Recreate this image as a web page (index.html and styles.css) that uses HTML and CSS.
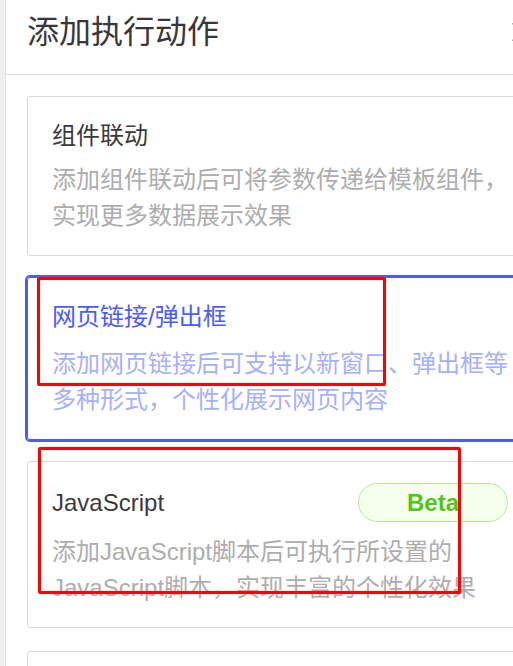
FILE: index.html
```html
<!DOCTYPE html>
<html lang="zh-CN">
<head>
  <meta charset="UTF-8">
  <meta name="viewport" content="width=device-width, initial-scale=1.0">
  <title>添加执行动作</title>
  <link rel="stylesheet" href="styles.css">
</head>
<body>
  <div class="page-edge"></div>
  <div class="drawer">
    <div class="drawer-header">
      <h1>添加执行动作</h1>
      <span class="close-icon">
        <svg width="22" height="22" viewBox="0 0 22 22"><path d="M2 2L20 20M20 2L2 20" stroke="#555" stroke-width="2.4" fill="none"/></svg>
      </span>
    </div>
    <div class="action-list">
      <!-- 组件联动 -->
      <div class="action-card">
        <div class="action-title">组件联动</div>
        <p class="action-desc">添加组件联动后可将参数传递给模板组件，实现更多数据展示效果</p>
      </div>
      <!-- 网页链接 -->
      <div class="action-card selected">
        <div class="action-title">网页链接/弹出框</div>
        <p class="action-desc">添加网页链接后可支持以新窗口、弹出框等多种形式，个性化展示网页内容</p>
      </div>
      <!-- JavaScript -->
      <div class="action-card js-card">
        <div class="action-title title-row">
          <span>JavaScript</span>
          <span class="beta-tag">Beta</span>
        </div>
        <p class="action-desc">添加JavaScript脚本后可执行所设置的JavaScript脚本，实现丰富的个性化效果</p>
      </div>
      <div class="action-card empty-card"></div>
    </div>
  </div>

  <!-- 标注框 -->
  <div class="mark mark-one"></div>
  <div class="mark mark-two"></div>
</body>
</html>
```

FILE: styles.css
```css
body {
  margin: 0;
  height: 666px;
  display: flex;
  overflow: hidden;
  position: relative;
  font-family: "Liberation Sans", "Noto Sans CJK SC", sans-serif;
  background-color: #fff;
}

.page-edge {
  flex: 0 0 5px;
  background-color: #efefef;
  border-right: 1px solid #e2e2e2;
}

.drawer {
  flex: 0 0 540px;
  background-color: #fff;
}

.drawer-header {
  height: 74px;
  display: flex;
  align-items: center;
  padding: 0 13px 0 21px;
  border-bottom: 1px solid #e4e4e4;
}
.drawer-header h1 {
  margin: -10px 0 0;
  font-size: 32px;
  font-weight: normal;
  color: #383838;
  line-height: 40px;
}
.close-icon {
  margin-left: auto;
  margin-top: -10px;
  display: flex;
}

.action-list {
  display: flex;
  flex-direction: column;
  gap: 21px;
  padding: 21px 0 0 21px;
}

.action-card {
  width: 460px;
  padding: 21px 24px;
  border: 1px solid #dadada;
  border-radius: 3px;
}
.action-card.selected {
  border-color: #4b5cfd;
  box-shadow: 0 0 0 2px #4b5cfd;
}
.empty-card {
  height: 120px;
  margin-top: 2px;
}

.action-title {
  font-size: 24px;
  line-height: 36px;
  color: #3a3a3a;
}
.selected .action-title {
  color: #4b5cfd;
}
.title-row {
  display: flex;
  align-items: center;
  justify-content: space-between;
  height: 39px;
}

.beta-tag {
  width: 148px;
  height: 37px;
  margin-right: 4px;
  border: 1px solid #b7eb8f;
  border-radius: 20px;
  background-color: #f6ffed;
  color: #52c41a;
  font-weight: bold;
  font-size: 24px;
  line-height: 37px;
  text-align: center;
}

.action-desc {
  margin: 8px 0 0;
  font-size: 24px;
  line-height: 36px;
  color: #adadad;
}
.selected .action-desc {
  margin-top: 11px;
  color: #a6b0fe;
}
.js-card .action-desc {
  margin-top: 12px;
}

.mark {
  position: absolute;
  border: 3px solid #ff0000;
  border-radius: 2px;
  box-sizing: border-box;
}
.mark-one {
  left: 37px;
  top: 277px;
  width: 349px;
  height: 109px;
}
.mark-two {
  left: 38px;
  top: 447px;
  width: 423px;
  height: 147px;
}
```
